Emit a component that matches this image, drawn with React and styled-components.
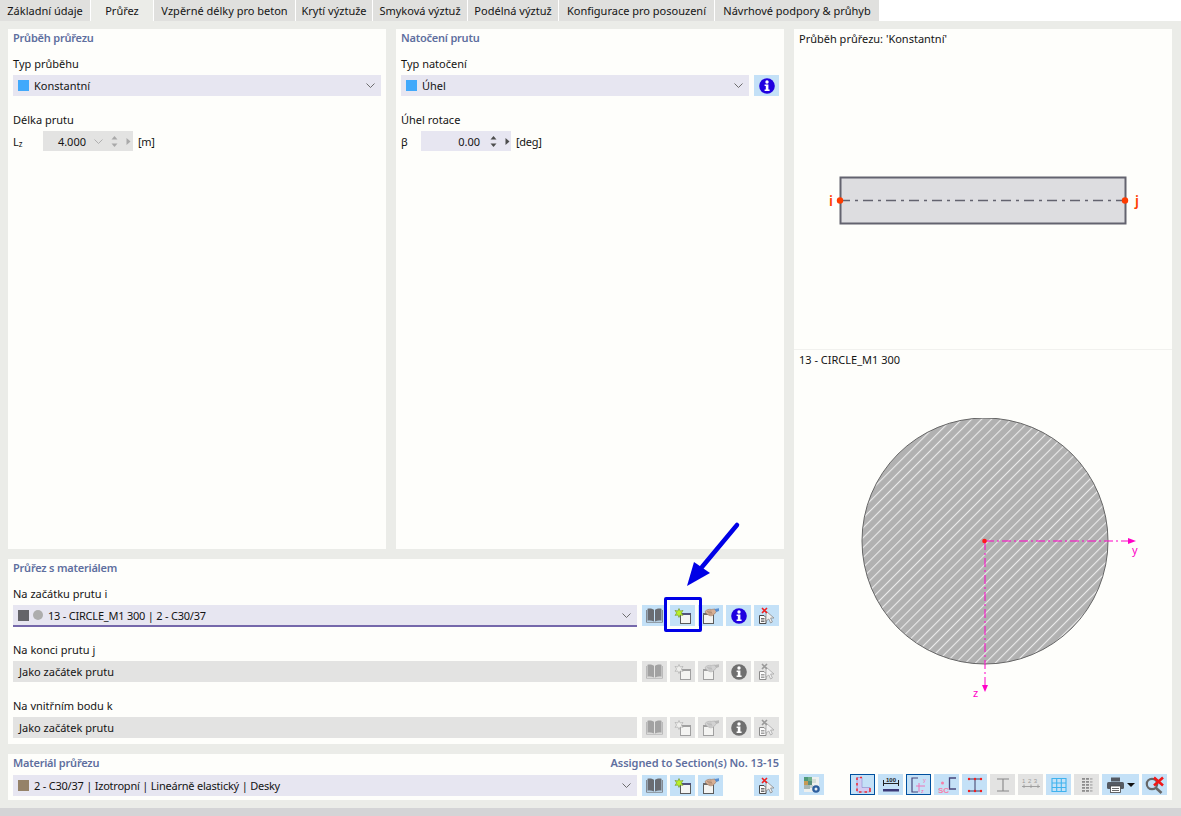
import React from 'react'
import styled, { createGlobalStyle } from 'styled-components'

const GlobalStyle = createGlobalStyle`
  html, body {
    margin: 0;
    padding: 0;
    background: #ebece8;
  }
  body {
    font-family: "Noto Sans", "Liberation Sans", sans-serif;
    font-size: 11px;
    color: #141414;
  }
`

const Page = styled.div`
  position: relative;
  width: 1181px;
  height: 816px;
  overflow: hidden;
  background: #ebece8;
  display: flex;
  flex-direction: column;
`

const TabBar = styled.div`
  display: flex;
  height: 21px;
  background: #ffffff;
  flex-shrink: 0;
`

const Tab = styled.div`
  display: flex;
  align-items: center;
  justify-content: center;
  width: ${p => p.$w}px;
  margin-right: 1px;
  background: ${p => (p.$active ? '#ebece8' : '#e0e0de')};
  white-space: nowrap;
`

const Main = styled.div`
  display: grid;
  grid-template-columns: 776px 378px;
  column-gap: 10px;
  padding: 8px 9px 0 8px;
  height: 771px;
  flex-shrink: 0;
`

const LeftColumn = styled.div`
  display: grid;
  grid-template-rows: 520px 185px 46px;
  row-gap: 10px;
`

const TopRow = styled.div`
  display: grid;
  grid-template-columns: 378px 388px;
  column-gap: 10px;
`

const Panel = styled.section`
  background: #fefefb;
  padding: 0 5px;
`

const TitleRow = styled.div`
  display: flex;
  justify-content: space-between;
  align-items: center;
  height: 17px;
`

const Title = styled.h3`
  margin: 0;
  font-size: 11px;
  font-weight: 600;
  color: #5f6f9f;
  letter-spacing: -0.22px;
`

const AssignedTitle = styled(Title)`
  letter-spacing: -0.06px;
`

const Label = styled.div`
  height: 16px;
  line-height: 16px;
  margin-top: ${p => p.$top || 0}px;
  margin-bottom: 3px;
`

const Row = styled.div`
  display: flex;
  align-items: flex-start;
`

const Select = styled.div`
  flex: 1;
  height: ${p => (p.$underline ? 20 : 21)}px;
  display: flex;
  align-items: center;
  padding: 0 6px 0 5px;
  background: #e7e6f1;
  border-bottom: ${p => (p.$underline ? '2px solid #7568ab' : 'none')};
  min-width: 0;
`

const ReadOnlyField = styled.div`
  flex: 1;
  height: 21px;
  display: flex;
  align-items: center;
  padding-left: 6px;
  background: #e3e3e2;
`

const Swatch = styled.span`
  width: 11px;
  height: 11px;
  background: ${p => p.$color};
  margin-right: 5px;
  flex-shrink: 0;
`

const Dot = styled.span`
  width: 10px;
  height: 10px;
  border-radius: 50%;
  background: #adadad;
  margin: 0 5px 0 -1px;
  flex-shrink: 0;
`

const SelectText = styled.span`
  flex: 1;
  white-space: nowrap;
  letter-spacing: ${p => (p.$tight ? '-0.22px' : '0')};
`

const Chevron = styled.svg`
  flex-shrink: 0;
  width: 9px;
  height: 5px;
  margin-left: ${p => p.$ml || 0}px;
`

const NumberRow = styled.div`
  display: flex;
  align-items: center;
  height: 20px;
`

const Symbol = styled.span`
  width: ${p => p.$w}px;
`

const NumberBox = styled.div`
  width: 90px;
  height: 20px;
  display: flex;
  align-items: center;
  background: ${p => (p.$disabled ? '#e3e3e2' : '#e7e6f1')};
`

const NumberValue = styled.span`
  width: ${p => p.$w}px;
  text-align: right;
  flex-shrink: 0;
`

const Spin = styled.svg`
  width: 7px;
  height: 13px;
  margin-left: ${p => p.$ml}px;
  flex-shrink: 0;
`

const StepArrow = styled.svg`
  width: 5px;
  height: 7px;
  margin-left: 8px;
  flex-shrink: 0;
`

const Unit = styled.span`
  margin-left: 5px;
  letter-spacing: -0.3px;
`

const Sub = styled.sub`
  font-size: 8px;
  vertical-align: -1px;
`

const IconGroup = styled.div`
  display: flex;
  gap: 3px;
  margin-left: 5px;
  flex-shrink: 0;
`

const IconButton = styled.button`
  width: 25px;
  height: 21px;
  padding: 0;
  display: flex;
  align-items: center;
  justify-content: center;
  flex-shrink: 0;
  box-sizing: border-box;
  border: ${p => (p.$pressed ? '1px solid #00509f' : 'none')};
  background: ${p => (p.$off ? '#e3e3e2' : '#c4e1f7')};
`

const SectionGap = styled.div`
  height: ${p => p.$h}px;
`

const SectionSpacer = styled.div`
  width: 25px;
`

const RightPanel = styled(Panel)`
  display: flex;
  flex-direction: column;
  padding: 0;
`

const DrawingPane = styled.div`
  height: 320px;
  border-bottom: 1px solid #f1f1ee;
  padding: 0 5px;
  flex-shrink: 0;
`

const SectionPane = styled.div`
  flex: 1;
  padding: 0 5px;
  min-height: 0;
`

const PaneTitle = styled.div`
  height: 20px;
  line-height: 20px;
`

const Drawing = styled.svg`
  display: block;
  margin: ${p => p.$top}px 0 0 -5px;
`

const Toolbar = styled.div`
  display: flex;
  gap: 3px;
  height: 21px;
  padding: 0 5px 5px;
`

const PrintButton = styled(IconButton)`
  width: 37px;
  gap: 3px;
`

const Spacer = styled.div`
  width: 23px;
`

const StatusBar = styled.div`
  flex: 1;
  margin-top: 8px;
  background: #d4d4d6;
`

const Marker = styled.div`
  position: absolute;
  left: 664px;
  top: 597px;
  width: 38px;
  height: 35px;
  box-sizing: border-box;
  border: 3px solid #0000e6;
  border-radius: 2px;
`

const Arrow = styled.svg`
  position: absolute;
  left: 680px;
  top: 520px;
`

const CaretDown = styled.span`
  width: 0;
  height: 0;
  border-left: 4px solid transparent;
  border-right: 4px solid transparent;
  border-top: 4px solid #111;
`

const BookIcon = ({ off }) => {
  const c = off ? '#a2a2a2' : '#696c72'
  return (
    <svg width="17" height="15" viewBox="0 0 17 15">
      <path d="M1.500 0.800 C3.500 0.300 6 0.500 8 1.800 V13.500 C6 12.400 3.500 12.200 1.500 12.700Z" fill={c} />
      <path d="M15.500 0.800 C13.500 0.300 11 0.500 9 1.800 V13.500 C11 12.400 13.500 12.200 15.500 12.700Z" fill={c} />
      <path d="M0.500 2 V14.300 H16.500 V2" fill="none" stroke={off ? '#b5b5b5' : '#7d8086'} strokeWidth="0.900" />
    </svg>
  )
}

const Window = ({ off, x = 6, dark }) => (
  <>
    <rect x={x + 0.5} y="5.500" width="10" height="10" fill="#f4f4f2" stroke={off ? '#a0a0a0' : '#5b5b5b'} />
    <rect x={x} y="5" width="11" height="2" fill={off ? '#a0a0a0' : dark ? '#6b6b6b' : '#50507a'} />
  </>
)

const NewIcon = ({ off }) => (
  <svg width="18" height="16" viewBox="0 0 18 16">
    <Window off={off} />
    <path
      d="M5 0.500 L6.200 3 L9 2.400 L7.400 5 L9 7.400 L6.200 7 L5 9.500 L3.800 7 L1 7.400 L2.600 5 L1 2.400 L3.800 3Z"
      fill={off ? '#eeeeec' : '#b8f02a'}
      stroke={off ? '#a8a8a8' : '#6f8f2a'}
      strokeWidth="0.600"
    />
  </svg>
)

const EditIcon = ({ off }) => {
  const line = off ? '#a6a6a6' : '#8a6a55'
  return (
    <svg width="18" height="16" viewBox="0 0 18 16">
      <Window off={off} x={1} dark />
      <path
        d="M3 3.500 C4.500 1.600 7 1 9.500 1.400 L13 1 L14.400 3.500 L12.500 6 C11 7.600 9.500 8 8 7.800 L5.500 6.500 L3.800 5Z"
        fill={off ? '#d2d2d2' : '#d8b096'}
        stroke={line}
        strokeWidth="0.500"
      />
      <path d="M5 3.400 L9.500 3 M5.800 4.800 L10 4.400 M7 6.200 L10.500 5.800" stroke={line} strokeWidth="0.500" />
      <path d="M12.500 1 L17 0.200 V3 L14.200 4Z" fill={off ? '#b8b8b8' : '#5a8fd0'} />
    </svg>
  )
}

const InfoIcon = ({ off }) => (
  <svg width="16" height="16" viewBox="0 0 16 16">
    <circle cx="8" cy="8" r="7.800" fill={off ? '#6f6f6f' : '#1f00e0'} />
    <circle cx="8" cy="4" r="1.700" fill="#fff" />
    <path d="M5.600 6.600 H9.400 V11.600 H10.600 V13 H5.600 V11.600 H6.800 V8 H5.600Z" fill="#fff" />
  </svg>
)

const ClearIcon = ({ off }) => (
  <svg width="17" height="17" viewBox="0 0 17 17">
    <path d="M1.500 8.500 H6 L8 10.500 V16.500 H1.500Z" fill="#fbfbfb" stroke={off ? '#8a8a8a' : '#4a4a4a'} />
    <path d="M3 11.500 H6.500 M3 13 H6.500 M3 14.500 H6.500" stroke={off ? '#8a8a8a' : '#4a4a4a'} strokeWidth="0.800" />
    <path d="M8 4 L16 11 H12.600 L14.400 15 L12.600 16 L10.800 12 L8 14Z" fill="#f1f1f1" stroke={off ? '#a8a8a8' : '#8a8a8a'} strokeWidth="0.800" />
    <path d="M4 1 L9 6 M9 1 L4 6" stroke={off ? '#9a9a9a' : '#ef2020'} strokeWidth="1.600" />
  </svg>
)

const DownChevron = ({ ml, color = '#5d5d5d' }) => (
  <Chevron $ml={ml} viewBox="0 0 9 5">
    <path d="M0.500 0.500 L4.500 4.500 L8.500 0.500" fill="none" stroke={color} strokeWidth="0.900" />
  </Chevron>
)

const Spinner = ({ ml, off }) => {
  const c = off ? '#a9a9a9' : '#4d4d4d'
  return (
    <Spin $ml={ml} viewBox="0 0 7 13">
      <path d="M3.500 1 L6.500 4.500 H0.500Z" fill={c} />
      <path d="M3.500 12 L6.500 8.500 H0.500Z" fill={c} />
    </Spin>
  )
}

const ToolSet = ({ off, skipInfo }) => (
  <IconGroup>
    <IconButton $off={off}><BookIcon off={off} /></IconButton>
    <IconButton $off={off}><NewIcon off={off} /></IconButton>
    <IconButton $off={off}><EditIcon off={off} /></IconButton>
    {skipInfo ? <SectionSpacer /> : <IconButton $off={off}><InfoIcon off={off} /></IconButton>}
    <IconButton $off={off}><ClearIcon off={off} /></IconButton>
  </IconGroup>
)

const BarDrawing = () => (
  <Drawing $top={117} width="378" height="70" viewBox="0 0 378 70">
    <rect x="46.500" y="11.500" width="285" height="46" fill="#dddde0" stroke="#63636f" strokeWidth="2" />
    <line x1="46" y1="34.500" x2="331" y2="34.500" stroke="#63636f" strokeWidth="1.500" strokeDasharray="10 5 3 5" />
    <circle cx="46" cy="34.500" r="3.200" fill="#ff3c00" />
    <circle cx="331" cy="34.500" r="3.200" fill="#ff3c00" />
    <text x="35" y="39.500" fill="#ff3c00" fontSize="14" fontWeight="600" fontFamily="Noto Sans">i</text>
    <text x="341" y="39.500" fill="#ff3c00" fontSize="14" fontWeight="600" fontFamily="Noto Sans">j</text>
  </Drawing>
)

const SectionDrawing = () => (
  <Drawing $top={48} width="378" height="290" viewBox="0 0 378 290">
    <defs>
      <pattern id="hatch" width="7" height="7" patternUnits="userSpaceOnUse" patternTransform="rotate(-45)">
        <rect width="7" height="7" fill="#b1b1b1" />
        <line x1="0" y1="0.600" x2="7" y2="0.600" stroke="#f0f0f0" strokeWidth="1" />
      </pattern>
    </defs>
    <circle cx="191" cy="123" r="123" fill="url(#hatch)" stroke="#666" strokeWidth="1" />
    <line x1="191" y1="123" x2="334" y2="123" stroke="#ff00c8" strokeWidth="1" strokeDasharray="9 3 2 3" />
    <line x1="191" y1="123" x2="191" y2="268" stroke="#ff00c8" strokeWidth="1" strokeDasharray="9 3 2 3" />
    <path d="M334 120 L342 123 L334 126Z" fill="#ff00c8" />
    <path d="M188 267 L191 274 L194 267Z" fill="#ff00c8" />
    <circle cx="190.500" cy="123" r="2.300" fill="#ff1a1a" />
    <text x="338" y="136" fill="#ff00c8" fontSize="11" fontFamily="Noto Sans">y</text>
    <text x="179" y="279" fill="#ff00c8" fontSize="11" fontFamily="Noto Sans">z</text>
  </Drawing>
)

const RenderIcon = () => (
  <svg width="18" height="18" viewBox="0 0 18 18">
    <rect x="1" y="1" width="15" height="15" fill="#eef0ee" />
    <rect x="1" y="1" width="4" height="4" fill="#4f9a78" />
    <rect x="5" y="1" width="4" height="4" fill="#6fb08a" />
    <rect x="1" y="5" width="4" height="4" fill="#c59a55" />
    <rect x="5" y="5" width="4" height="4" fill="#5a8f7a" />
    <rect x="9" y="3" width="4" height="4" fill="#d5dfd8" />
    <rect x="1" y="9" width="6" height="4" fill="#a6b5b2" />
    <rect x="7" y="9" width="3" height="3" fill="#c7d0cf" />
    <circle cx="13" cy="13" r="3.800" fill="#2d5f9e" />
    <circle cx="13" cy="13" r="1.500" fill="#e8eef5" />
  </svg>
)

const SectionLIcon = () => (
  <svg width="18" height="18" viewBox="0 0 18 18">
    <path d="M3 1.500 H8 V11.500 H16 V16 H3Z" fill="#d3cbf2" stroke="#7f78c4" strokeWidth="0.500" />
    <path d="M3 1.500 V16 H16" fill="none" stroke="#f0303a" strokeWidth="1.600" strokeDasharray="2.500 3" />
    <path d="M6 1.500 H8 M16 12 V16" fill="none" stroke="#f0303a" strokeWidth="1.600" />
  </svg>
)

const DimensionIcon = () => (
  <svg width="18" height="18" viewBox="0 0 18 18">
    <text x="9" y="5.500" textAnchor="middle" fontSize="6" fontWeight="700" fill="#222" fontFamily="Liberation Sans">100</text>
    <path d="M1.500 4 V10 M16.500 4 V10 M1.500 7.500 H16.500" stroke="#222" strokeWidth="1" />
    <rect x="1" y="13" width="16" height="2.500" fill="#3b3a78" />
  </svg>
)

const AxesIcon = () => (
  <svg width="18" height="18" viewBox="0 0 18 18">
    <path d="M8 2 H2 V16 H8" fill="none" stroke="#46467a" strokeWidth="1.200" />
    <path d="M6 10 H15 M9 7 V16" stroke="#f46cb0" strokeWidth="0.900" />
    <text x="13" y="6" fontSize="5.500" fill="#f46cb0" fontFamily="Liberation Sans">y</text>
    <text x="11" y="16.500" fontSize="5.500" fill="#f46cb0" fontFamily="Liberation Sans">z</text>
  </svg>
)

const ShearCenterIcon = () => (
  <svg width="20" height="18" viewBox="0 0 20 18">
    <path d="M19 2 H12.500 V13 H19" fill="none" stroke="#46467a" strokeWidth="1.300" />
    <circle cx="5.500" cy="7" r="1.500" fill="#f77ea8" />
    <text x="1" y="16.500" fontSize="8" fontWeight="700" fill="#f77ea8" fontFamily="Liberation Sans">SC</text>
  </svg>
)

const StressPointsIcon = () => (
  <svg width="18" height="18" viewBox="0 0 18 18">
    <path d="M2 3 H16 M2 15 H16 M9 3 V15" stroke="#3c3c66" strokeWidth="1" />
    <g fill="#f02020">
      <circle cx="3" cy="3" r="1.200" /><circle cx="9" cy="3" r="1.200" /><circle cx="15" cy="3" r="1.200" />
      <circle cx="3" cy="15" r="1.200" /><circle cx="9" cy="15" r="1.200" /><circle cx="15" cy="15" r="1.200" />
    </g>
  </svg>
)

const BeamIcon = () => (
  <svg width="18" height="18" viewBox="0 0 18 18">
    <path d="M3 3 H15 M3 15 H15 M9 3 V15" stroke="#878787" strokeWidth="1.100" />
  </svg>
)

const NumberingIcon = () => (
  <svg width="20" height="18" viewBox="0 0 20 18">
    <text x="1" y="7" fontSize="6" fill="#9a9a9a" fontFamily="Liberation Sans" letterSpacing="2.600">123</text>
    <path d="M1 10.500 H19 M3 8.500 V12 M10 8.500 V12 M17 8.500 V12" stroke="#9a9a9a" strokeWidth="0.900" />
  </svg>
)

const GridIcon = () => (
  <svg width="16" height="16" viewBox="0 0 16 16">
    <path d="M1 1.500 H15 V14.500 H1Z M1 6 H15 M1 10.500 H15 M5.700 1.500 V14.500 M10.300 1.500 V14.500" fill="none" stroke="#3fb3ee" strokeWidth="1.100" />
  </svg>
)

const ListIcon = () => (
  <svg width="12" height="18" viewBox="0 0 12 18">
    {[2, 5, 8, 11, 14].map(y => (
      <g key={y} fill="#8d8d8d">
        <rect x="1" y={y} width="3" height="1.800" />
        <rect x="5" y={y} width="3" height="1.800" />
        <rect x="9" y={y} width="2.500" height="1.800" opacity="0.500" />
      </g>
    ))}
  </svg>
)

const PrinterIcon = () => (
  <svg width="17" height="16" viewBox="0 0 17 16">
    <rect x="4" y="0.500" width="9" height="4" fill="#555a62" />
    <rect x="0" y="5" width="17" height="7" rx="1.500" fill="#555a62" />
    <rect x="3.500" y="9" width="10" height="6.500" fill="#fff" stroke="#444" strokeWidth="0.800" />
    <path d="M5 11.500 H12 M5 13.500 H12" stroke="#444" strokeWidth="0.800" />
  </svg>
)

const ZoomResetIcon = () => (
  <svg width="20" height="18" viewBox="0 0 20 18">
    <circle cx="7" cy="8" r="5.200" fill="none" stroke="#666" strokeWidth="2.200" />
    <path d="M10.500 11.500 L16.500 17" stroke="#666" strokeWidth="2.600" />
    <path d="M9 1.500 L18 9.500 M18 1.500 L9 9.500" stroke="#f01818" strokeWidth="2.600" />
  </svg>
)

const TABS = [
  { label: 'Základní údaje', w: 90 },
  { label: 'Průřez', w: 62, active: true },
  { label: 'Vzpěrné délky pro beton', w: 141 },
  { label: 'Krytí výztuže', w: 76 },
  { label: 'Smyková výztuž', w: 94 },
  { label: 'Podélná výztuž', w: 90 },
  { label: 'Konfigurace pro posouzení', w: 155 },
  { label: 'Návrhové podpory & průhyb', w: 164 },
]

export default function App() {
  return (
    <Page>
      <GlobalStyle />
      <TabBar>
        {TABS.map(t => (
          <Tab key={t.label} $w={t.w} $active={t.active}>{t.label}</Tab>
        ))}
      </TabBar>
      <Main>
        <LeftColumn>
          <TopRow>
            <Panel>
              <TitleRow><Title>Průběh průřezu</Title></TitleRow>
              <Label $top={10}>Typ průběhu</Label>
              <Row>
                <Select>
                  <Swatch $color="#41a9fb" />
                  <SelectText>Konstantní</SelectText>
                  <DownChevron />
                </Select>
              </Row>
              <Label $top={16}>Délka prutu</Label>
              <NumberRow>
                <Symbol $w={30}>L<Sub>z</Sub></Symbol>
                <NumberBox $disabled>
                  <NumberValue $w={43}>4.000</NumberValue>
                  <DownChevron ml={8} color="#a9a9a9" />
                  <Spinner ml={8} off />
                  <StepArrow viewBox="0 0 5 7"><path d="M0.500 0 L4.500 3.500 L0.500 7Z" fill="#a9a9a9" /></StepArrow>
                </NumberBox>
                <Unit>[m]</Unit>
              </NumberRow>
            </Panel>
            <Panel>
              <TitleRow><Title>Natočení prutu</Title></TitleRow>
              <Label $top={10}>Typ natočení</Label>
              <Row>
                <Select>
                  <Swatch $color="#41a9fb" />
                  <SelectText>Úhel</SelectText>
                  <DownChevron />
                </Select>
                <IconGroup><IconButton><InfoIcon /></IconButton></IconGroup>
              </Row>
              <Label $top={16}>Úhel rotace</Label>
              <NumberRow>
                <Symbol $w={20}>β</Symbol>
                <NumberBox>
                  <NumberValue $w={59}>0.00</NumberValue>
                  <Spinner ml={10} />
                  <StepArrow viewBox="0 0 5 7"><path d="M0.500 0 L4.500 3.500 L0.500 7Z" fill="#4d4d4d" /></StepArrow>
                </NumberBox>
                <Unit>[deg]</Unit>
              </NumberRow>
            </Panel>
          </TopRow>

          <Panel>
            <TitleRow><Title>Průřez s materiálem</Title></TitleRow>
            <Label $top={10}>Na začátku prutu i</Label>
            <Row>
              <Select $underline>
                <Swatch $color="#646469" />
                <Dot />
                <SelectText $tight>13 - CIRCLE_M1 300 | 2 - C30/37</SelectText>
                <DownChevron />
              </Select>
              <ToolSet />
            </Row>
            <SectionGap $h={15} />
            <Label>Na konci prutu j</Label>
            <Row>
              <ReadOnlyField>Jako začátek prutu</ReadOnlyField>
              <ToolSet off />
            </Row>
            <SectionGap $h={16} />
            <Label>Na vnitřním bodu k</Label>
            <Row>
              <ReadOnlyField>Jako začátek prutu</ReadOnlyField>
              <ToolSet off />
            </Row>
          </Panel>

          <Panel>
            <TitleRow>
              <Title>Materiál průřezu</Title>
              <AssignedTitle>Assigned to Section(s) No. 13-15</AssignedTitle>
            </TitleRow>
            <SectionGap $h={4} />
            <Row>
              <Select>
                <Swatch $color="#958268" />
                <SelectText $tight>2 - C30/37 | Izotropní | Lineárně elastický | Desky</SelectText>
                <DownChevron />
              </Select>
              <ToolSet skipInfo />
            </Row>
          </Panel>
        </LeftColumn>

        <RightPanel>
          <DrawingPane>
            <PaneTitle>Průběh průřezu: 'Konstantní'</PaneTitle>
            <BarDrawing />
          </DrawingPane>
          <SectionPane>
            <PaneTitle>13 - CIRCLE_M1 300</PaneTitle>
            <SectionDrawing />
          </SectionPane>
          <Toolbar>
            <IconButton><RenderIcon /></IconButton>
            <Spacer />
            <IconButton $pressed><SectionLIcon /></IconButton>
            <IconButton><DimensionIcon /></IconButton>
            <IconButton $pressed><AxesIcon /></IconButton>
            <IconButton><ShearCenterIcon /></IconButton>
            <IconButton><StressPointsIcon /></IconButton>
            <IconButton $off><BeamIcon /></IconButton>
            <IconButton $off><NumberingIcon /></IconButton>
            <IconButton><GridIcon /></IconButton>
            <IconButton $off><ListIcon /></IconButton>
            <PrintButton><PrinterIcon /><CaretDown /></PrintButton>
            <IconButton><ZoomResetIcon /></IconButton>
          </Toolbar>
        </RightPanel>
      </Main>
      <StatusBar />
      <Marker />
      <Arrow width="70" height="72" viewBox="0 0 70 72">
        <line x1="57" y1="5" x2="22" y2="47" stroke="#0000e6" strokeWidth="4.500" strokeLinecap="round" />
        <path d="M7 66 L14 42 L30 53Z" fill="#0000e6" />
      </Arrow>
    </Page>
  )
}
